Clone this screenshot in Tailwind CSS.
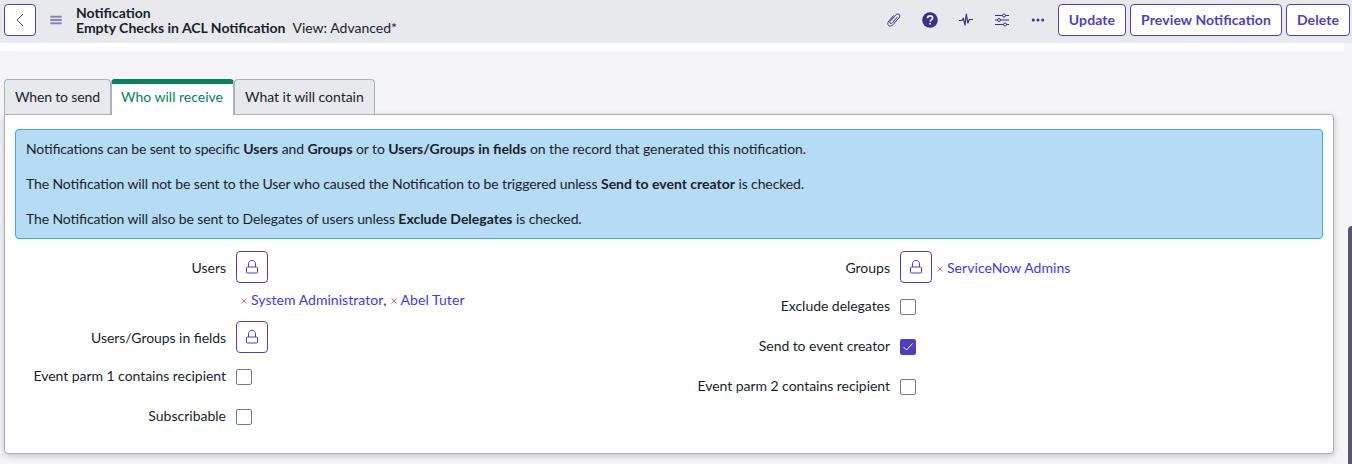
<!DOCTYPE html>
<html lang="en">
<head>
<meta charset="utf-8">
<title>Notification</title>
<script src="https://cdn.jsdelivr.net/npm/@tailwindcss/browser@4"></script>
</head>
<body class="h-[464px] w-[1352px] overflow-hidden bg-[#f5f5f7] font-[Lato,sans-serif] text-sm text-[#181f2a] [font-feature-settings:'liga'_1]">
<svg class="hidden">
  <symbol id="lock" viewBox="0 0 16 16"><g fill="none" stroke="currentColor"><rect x="2.500" y="8" width="11" height="6" rx="1"/><path d="M4.500 8V4.900C4.500 2.800 6 1.300 8 1.300s3.500 1.500 3.500 3.600V8"/></g></symbol>
</svg>
<div class="relative h-full">
  <header class="flex h-[43px] items-start bg-[#e8e9ed] pt-1 pl-1">
    <button class="flex size-8 items-center justify-center rounded border border-[#4f3fc0] bg-white text-[#4f3fc0]">
      <svg class="size-4" viewBox="0 0 16 16" fill="none" stroke="currentColor"><path d="M11 2 5 8l6 6"/></svg>
    </button>
    <svg class="mt-2 ml-3 size-4 text-[#8983b8]" viewBox="0 0 16 16" stroke="currentColor" stroke-width="1.900"><path d="M2.300 4.700h11.400M2.300 8h11.400M2.300 11.300h11.400"/></svg>
    <div class="ml-3 pt-px leading-[15px] whitespace-nowrap">
      <div class="font-bold">Notification</div>
      <div><b>Empty Checks in ACL Notification</b><span class="ml-[7px]">View: Advanced*</span></div>
    </div>
    <div class="ml-auto flex gap-1 pr-[2px] text-[#3c2e88]">
      <div class="mr-2 flex items-center gap-5">
        <svg class="size-4" viewBox="0 0 16 16" fill="none" stroke="currentColor" stroke-linecap="round"><path d="m11.300 5.200-5 5.700c-.6.700-1.600.7-2.100.2s-.5-1.300.1-2l5.500-6.200c1-1.100 2.500-1.300 3.400-.5s.9 2.200-.1 3.300l-6.200 7.100c-1.300 1.500-3.200 1.700-4.300.7s-1.100-2.900.1-4.300l4.800-5.500"/></svg>
        <svg class="size-4" viewBox="0 0 16 16"><circle cx="8" cy="8" r="7.800" fill="currentColor"/><path d="M5.500 6.300c0-1.600 1.100-2.500 2.600-2.500s2.500.9 2.500 2.200c0 1.800-2.300 1.800-2.300 3.500M8.200 10.700v1.800" fill="none" stroke="#e8e9ed" stroke-width="1.800"/></svg>
        <svg class="size-4" viewBox="0 0 16 16" fill="none" stroke="currentColor" stroke-width="1.200" stroke-linejoin="round"><path d="M1 8.500h3l1.300-2.300 1.700 7L8.300 2l1.500 9 1.500-3.500H15"/></svg>
        <svg class="size-4" viewBox="0 0 16 16" fill="none" stroke="currentColor"><path d="M1 3.500h7.500M11.500 3.500H15M1 8h2.500M6.500 8H15M1 12.500h8.500M12.500 12.500H15"/><circle cx="10" cy="3.500" r="1.500"/><circle cx="5" cy="8" r="1.500"/><circle cx="11" cy="12.500" r="1.500"/></svg>
        <svg class="size-4" viewBox="0 0 16 16" fill="currentColor"><circle cx="3.300" cy="8" r="1.500"/><circle cx="8" cy="8" r="1.500"/><circle cx="12.700" cy="8" r="1.500"/></svg>
      </div>
      <button class="h-8 w-[68px] rounded border border-[#4f3fc0] bg-white font-bold tracking-[0.1px] whitespace-nowrap text-[#4f3fc0]">Update</button>
      <button class="h-8 w-[152px] rounded border border-[#4f3fc0] bg-white font-bold tracking-[0.1px] whitespace-nowrap text-[#4f3fc0]">Preview Notification</button>
      <button class="h-8 w-16 rounded border border-[#4f3fc0] bg-white font-bold tracking-[0.1px] whitespace-nowrap text-[#4f3fc0]">Delete</button>
    </div>
  </header>
  <div class="h-2 w-[1344px] bg-white"></div>
  <nav class="relative z-10 mt-7 ml-1 flex h-9 whitespace-nowrap">
    <div class="h-[35px] w-[107px] rounded-t border border-b-0 border-[#abb0bd] bg-[#e8e9ed] pl-[10px] leading-[33px] tracking-[-0.15px]">When to send</div>
    <div class="h-9 w-[123px] rounded-t border-x border-t-[5px] border-x-[#abb0bd] border-t-[#04845b] bg-white pl-[9px] leading-[25px] text-[#04845b]">Who will receive</div>
    <div class="h-[35px] w-[141px] rounded-t border border-b-0 border-[#abb0bd] bg-[#e8e9ed] pl-[10px] leading-[33px] tracking-[-0.03px]">What it will contain</div>
  </nav>
  <main class="-mt-px ml-1 h-[340px] w-[1330px] rounded-b rounded-tr border border-[#abb0bd] bg-white px-[10px] pt-[14px] shadow-[0_2px_6px_rgba(0,0,0,0.2)]">
    <section class="flex h-[110px] flex-col gap-[15px] rounded border border-[#3fa9e3] bg-[#b5dbf5] px-[10px] pt-[9px] leading-5 tracking-[-0.115px] whitespace-nowrap">
      <p><span class="tracking-[-0.15px]">Notifications can be sent to specific </span><b class="tracking-normal">Users</b> and <b class="tracking-normal">Groups</b> or to <b class="tracking-normal">Users/Groups in fields</b><span class="tracking-[-0.07px]"> on the record that generated this notification.</span></p>
      <p>The Notification will not be sent to the User who caused the Notification to be triggered unless <b class="tracking-normal">Send to event creator</b> is checked.</p>
      <p>The Notification will also be sent to Delegates of users unless <b class="tracking-normal">Exclude Delegates</b> is checked.</p>
    </section>
    <div class="flex pt-3 whitespace-nowrap">
      <div class="w-[664px]">
        <div class="flex h-8 items-center gap-[10px]"><label class="w-[211px] pt-0.5 text-right">Users</label><button class="flex size-8 items-center justify-center rounded border border-[#4f3fc0] text-[#4f3fc0]"><svg class="size-4"><use href="#lock"/></svg></button></div>
        <div class="flex h-[38px] items-center pb-1 pl-[226px]"><svg class="mt-0.5 mr-1 size-[6px]" viewBox="0 0 6 6" stroke="#ff4545" stroke-width=".9"><path d="m.5.500 5 5m0-5-5 5"/></svg><a class="tracking-[0.04px] text-[#3c3cec]">System Administrator</a>,<svg class="mt-0.5 mr-1 ml-1 size-[6px]" viewBox="0 0 6 6" stroke="#ff4545" stroke-width=".9"><path d="m.5.500 5 5m0-5-5 5"/></svg><a class="tracking-[0.08px] text-[#3c3cec]">Abel Tuter</a></div>
        <div class="flex h-8 items-center gap-[10px]"><label class="w-[211px] pt-0.5 text-right tracking-[-0.06px]">Users/Groups in fields</label><button class="flex size-8 items-center justify-center rounded border border-[#4f3fc0] text-[#4f3fc0]"><svg class="size-4"><use href="#lock"/></svg></button></div>
        <div class="mt-4 flex h-4 items-center gap-[10px]"><label class="w-[211px] pb-0.5 text-right tracking-[-0.04px]">Event parm 1 contains recipient</label><span class="size-4 rounded-xs border border-[#747b8d]"></span></div>
        <div class="mt-6 flex h-4 items-center gap-[10px]"><label class="w-[211px] pb-0.5 text-right">Subscribable</label><span class="size-4 rounded-xs border border-[#747b8d]"></span></div>
      </div>
      <div>
        <div class="flex h-8 items-center gap-[10px]"><label class="w-[211px] pt-0.5 text-right">Groups</label><button class="flex size-8 items-center justify-center rounded border border-[#4f3fc0] text-[#4f3fc0]"><svg class="size-4"><use href="#lock"/></svg></button><div class="-ml-[5px] flex items-center pt-0.5"><svg class="mt-0.5 mr-1 size-[6px]" viewBox="0 0 6 6" stroke="#ff4545" stroke-width=".9"><path d="m.5.500 5 5m0-5-5 5"/></svg><a class="tracking-[0.06px] text-[#3c3cec]">ServiceNow Admins</a></div></div>
        <div class="mt-4 flex h-4 items-center gap-[10px]"><label class="w-[211px] pb-0.5 text-right tracking-[-0.04px]">Exclude delegates</label><span class="size-4 rounded-xs border border-[#747b8d]"></span></div>
        <div class="mt-6 flex h-4 items-center gap-[10px]"><label class="w-[211px] pb-0.5 text-right tracking-[-0.06px]">Send to event creator</label><span class="size-4 rounded-xs bg-[#4f3fc0]"><svg class="size-4" viewBox="0 0 16 16" fill="none" stroke="white"><path d="m3.500 8 3 3 6-6.500"/></svg></span></div>
        <div class="mt-6 flex h-4 items-center gap-[10px]"><label class="w-[211px] pb-0.5 text-right tracking-[-0.04px]">Event parm 2 contains recipient</label><span class="size-4 rounded-xs border border-[#747b8d]"></span></div>
      </div>
    </div>
  </main>
  <div class="absolute top-[226px] right-0 h-[238px] w-1 rounded-tl bg-[#5b566f]"></div>
</div>
</body>
</html>
